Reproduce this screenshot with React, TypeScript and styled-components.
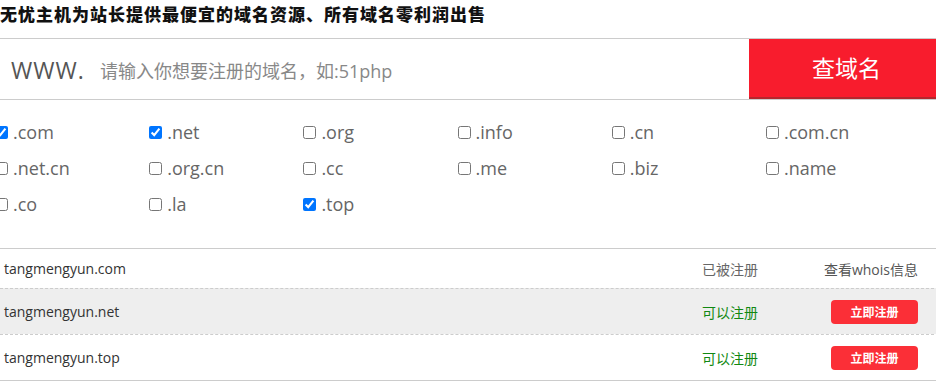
import React from 'react';
import styled, { createGlobalStyle } from 'styled-components';

const GlobalStyle = createGlobalStyle`
  html, body {
    margin: 0;
    padding: 0;
    background: #fff;
    overflow: hidden;
  }
  body {
    font-family: "Noto Sans", "Noto Sans CJK SC", sans-serif;
    color: #333;
  }
`;

interface Suffix {
  name: string;
  checked: boolean;
}

interface Result {
  domain: string;
  taken: boolean;
}

const suffixes: Suffix[] = [
  { name: '.com', checked: true },
  { name: '.net', checked: true },
  { name: '.org', checked: false },
  { name: '.info', checked: false },
  { name: '.cn', checked: false },
  { name: '.com.cn', checked: false },
  { name: '.net.cn', checked: false },
  { name: '.org.cn', checked: false },
  { name: '.cc', checked: false },
  { name: '.me', checked: false },
  { name: '.biz', checked: false },
  { name: '.name', checked: false },
  { name: '.co', checked: false },
  { name: '.la', checked: false },
  { name: '.top', checked: true },
];

const results: Result[] = [
  { domain: 'tangmengyun.com', taken: true },
  { domain: 'tangmengyun.net', taken: false },
  { domain: 'tangmengyun.top', taken: false },
];

const Page = styled.div`
  width: 944px;
`;

const Title = styled.h1`
  margin: 0 0 11px;
  font-family: "Noto Sans CJK SC", sans-serif;
  font-size: 17px;
  font-weight: 900;
  line-height: 27px;
  color: #111;
  letter-spacing: 1px;
`;

const SearchBar = styled.div`
  display: flex;
  height: 60px;
  border-top: 1px solid #ccc;
  border-bottom: 1px solid #ccc;
`;

const Prefix = styled.span`
  display: flex;
  align-items: center;
  padding: 2px 0 0 11px;
  width: 89px;
  font-family: "Open Sans", sans-serif;
  font-size: 23px;
  letter-spacing: 1px;
  color: #555;
`;

const DomainInput = styled.input`
  flex: 1;
  border: 0;
  outline: none;
  padding: 4px 0 0;
  font-family: "Open Sans", "Noto Sans CJK SC", sans-serif;
  font-size: 18px;
  color: #333;
  background: transparent;

  &::placeholder {
    color: #888;
  }
`;

const SearchButton = styled.button`
  width: 195px;
  border: 0;
  border-bottom: 2px solid #b5262d;
  background: #f81c2d;
  color: #fff;
  font-family: "Noto Sans CJK SC", sans-serif;
  font-size: 23px;
  padding: 0 0 2px;
  cursor: pointer;
`;

const SuffixGrid = styled.div`
  display: grid;
  grid-template-columns: repeat(6, 154.2px);
  grid-auto-rows: 36px;
  margin-left: -5px;
  padding: 14px 0 26px;
`;

const SuffixItem = styled.label`
  display: flex;
  align-items: center;
  gap: 5px;
  font-family: "Open Sans", sans-serif;
  font-size: 18px;
  color: #666;
`;

const Check = styled.input`
  width: 13px;
  height: 13px;
  margin: 0;
`;

const ResultList = styled.div`
  border-top: 1px solid #ccc;
  border-bottom: 1px solid #ccc;
`;

const Row = styled.div<{ $height: number; $shaded?: boolean; $first?: boolean }>`
  display: grid;
  grid-template-columns: 1fr auto 160px 26px;
  align-items: center;
  height: ${(p) => p.$height}px;
  padding-left: 4px;
  background: ${(p) => (p.$shaded ? '#eee' : '#fff')};
  border-top: ${(p) => (p.$first ? '0' : '1px dashed #ccc')};
  font-size: 14px;
`;

const DomainName = styled.span`
  font-family: "Open Sans", sans-serif;
  color: #333;
`;

const Status = styled.span<{ $free: boolean }>`
  font-family: "Noto Sans CJK SC", sans-serif;
  color: ${(p) => (p.$free ? '#118811' : '#666')};
`;

const ActionCell = styled.span`
  justify-self: end;
  display: flex;
`;

const WhoisLink = styled.span`
  font-family: "Open Sans", "Noto Sans CJK SC", sans-serif;
  color: #555;
`;

const RegisterButton = styled.button`
  width: 87px;
  height: 24px;
  border: 0;
  border-radius: 4px;
  background: #fb2f37;
  color: #fff;
  font-family: "Noto Sans CJK SC", sans-serif;
  font-size: 12px;
  font-weight: 700;
  cursor: pointer;
`;

const App: React.FC = () => {
  return (
    <Page>
      <GlobalStyle />
      <Title>无忧主机为站长提供最便宜的域名资源、所有域名零利润出售</Title>
      <SearchBar>
        <Prefix>WWW.</Prefix>
        <DomainInput placeholder="请输入你想要注册的域名，如:51php" />
        <SearchButton>查域名</SearchButton>
      </SearchBar>
      <SuffixGrid>
        {suffixes.map((s) => (
          <SuffixItem key={s.name}>
            <Check type="checkbox" defaultChecked={s.checked} />
            {s.name}
          </SuffixItem>
        ))}
      </SuffixGrid>
      <ResultList>
        {results.map((r, i) => (
          <Row key={r.domain} $height={i === 0 ? 39 : 45} $shaded={i === 1} $first={i === 0}>
            <DomainName>{r.domain}</DomainName>
            <Status $free={!r.taken}>{r.taken ? '已被注册' : '可以注册'}</Status>
            <ActionCell>
              {r.taken ? <WhoisLink>查看whois信息</WhoisLink> : <RegisterButton>立即注册</RegisterButton>}
            </ActionCell>
            <span />
          </Row>
        ))}
      </ResultList>
    </Page>
  );
};

export default App;
